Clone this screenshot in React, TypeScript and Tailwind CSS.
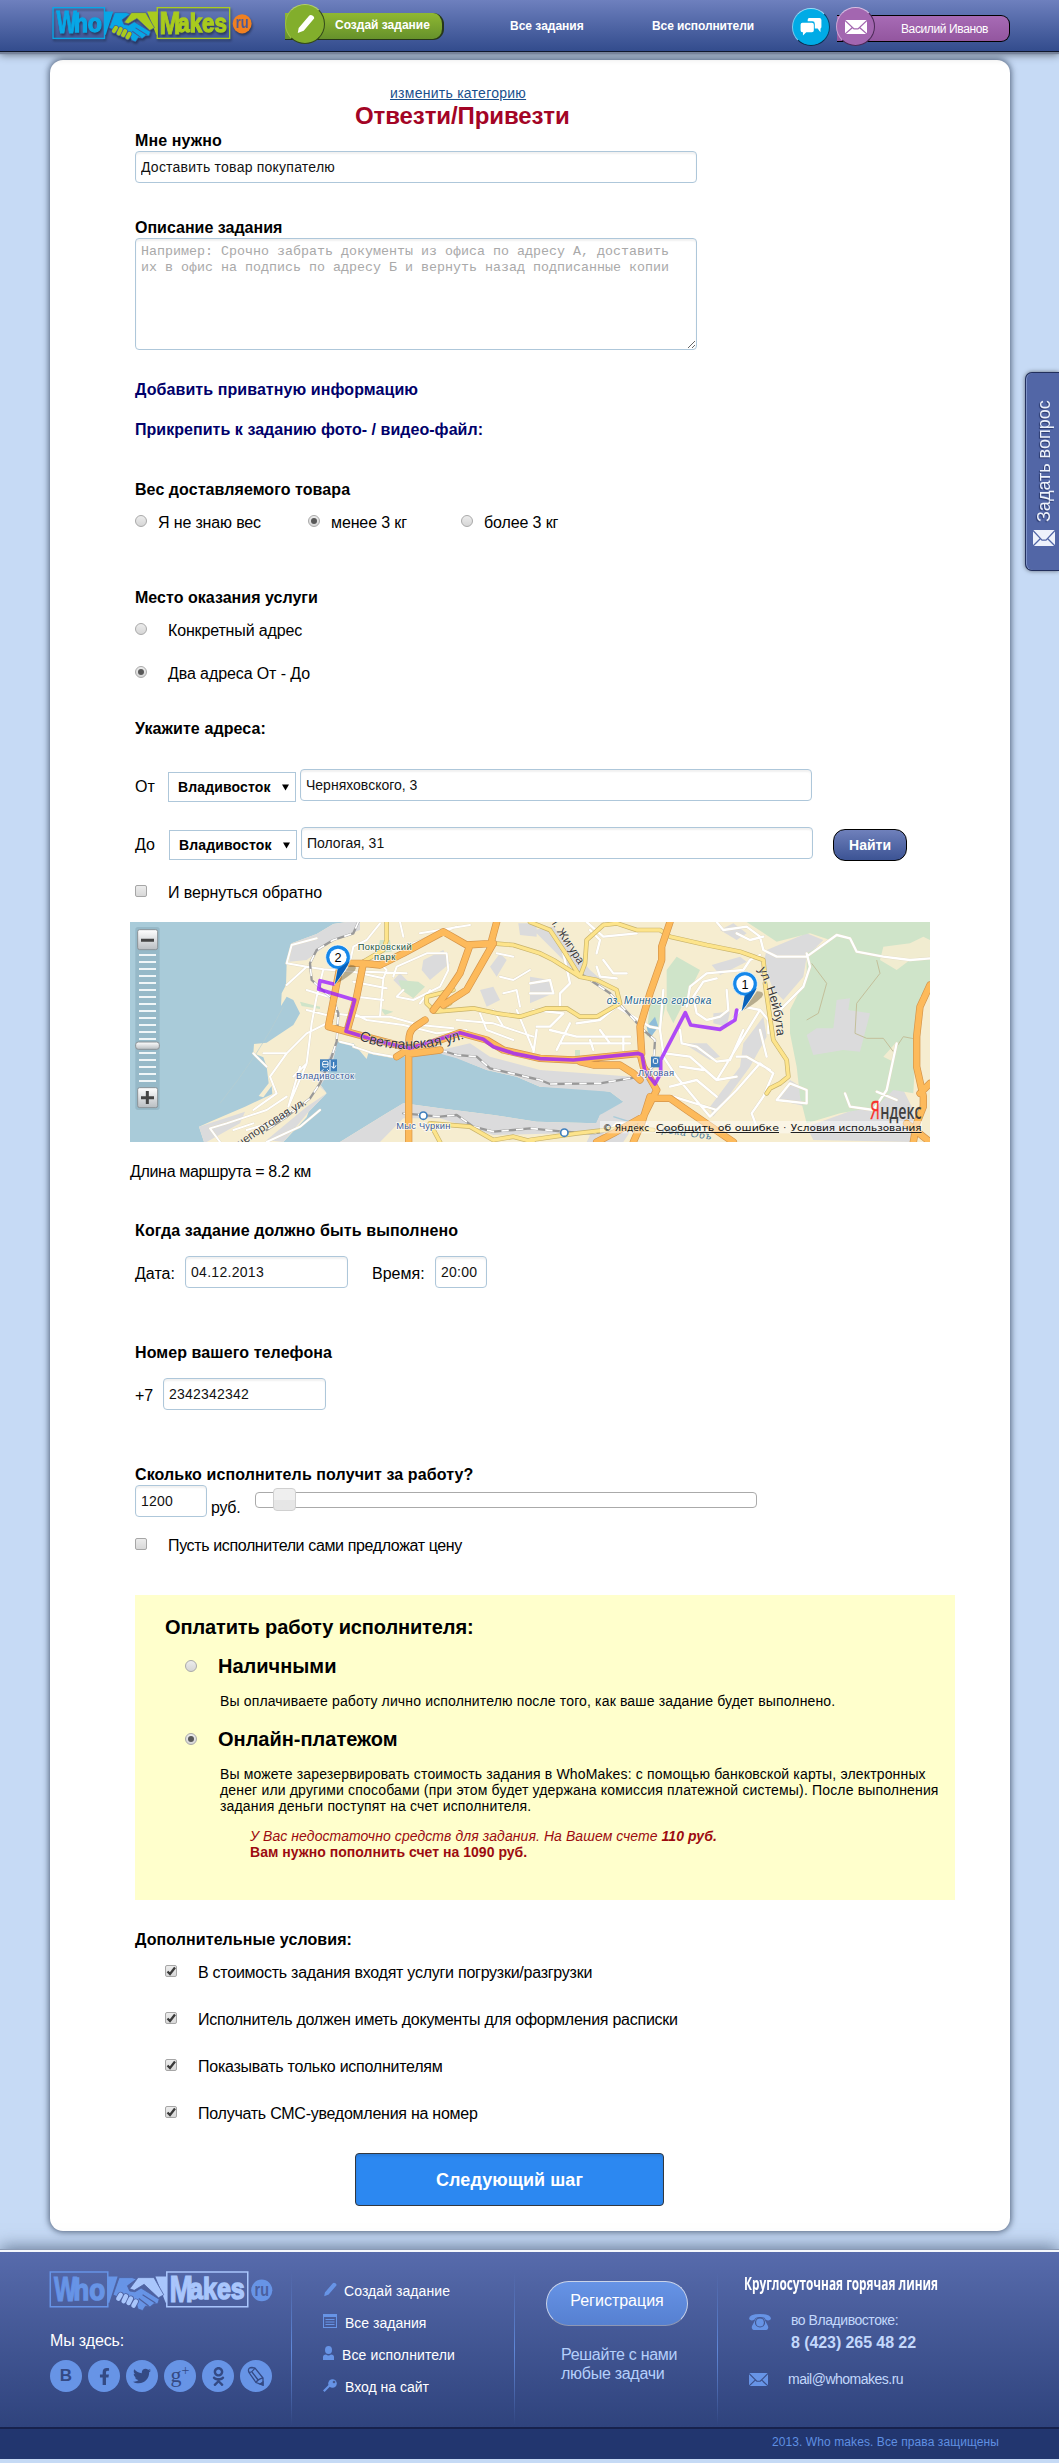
import React from "react";
import { FaFacebookF, FaTwitter, FaOdnoklassniki } from "react-icons/fa";

const arial = "font-['Liberation_Sans',sans-serif]";

type LogoColors = { who: string; makes: string; ru: string; ruText: string; line: string };

function Logo({ c, className }: { c: LogoColors; className: string }) {
  const face = { fontFamily: "Liberation Sans, sans-serif", fontWeight: 700 };
  return (
    <svg viewBox="150 15 600 115" preserveAspectRatio="none" className={className}>
      <rect x="156" y="23" width="152" height="93" fill="none" stroke={c.who} strokeWidth="4" />
      <rect x="464" y="23" width="214" height="93" fill="none" stroke={c.makes} strokeWidth="4" />
      <text x="166" y="101" fontSize="94" textLength="60" lengthAdjust="spacingAndGlyphs" fill={c.who} stroke={c.who} strokeWidth="3" style={face}>W</text>
      <text x="217" y="97" fontSize="80" textLength="84" lengthAdjust="spacingAndGlyphs" fill={c.who} stroke={c.who} strokeWidth="4" style={face}>ho</text>
      <text x="471" y="102" fontSize="97" textLength="62" lengthAdjust="spacingAndGlyphs" fill={c.makes} stroke={c.makes} strokeWidth="3" style={face}>M</text>
      <text x="523" y="96" fontSize="78" textLength="147" lengthAdjust="spacingAndGlyphs" fill={c.makes} stroke={c.makes} strokeWidth="4" style={face}>akes</text>
      <path d="M308 35H334L312 105H308Z" fill={c.who} />
      <path d="M464 35H434L461 105H464Z" fill={c.makes} />
      <path d="M338 38L372 38L384 42L360 60L366 74L380 76L396 66L444 96L440 108L430 108L420 116L408 114L400 126L388 122L384 108L372 98L356 88L346 82L334 90L322 84Z" fill={c.who} stroke={c.line} strokeWidth="2" />
      <path d="M388 38L430 38L456 84L442 92L404 56L378 72L366 68Z" fill={c.makes} stroke={c.line} strokeWidth="2" />
      <path d="M400 84L434 106M390 94L416 114" stroke={c.line} strokeWidth="3" fill="none" />
      <g strokeLinecap="round" fill="none">
        <path d="M342 84L336 94M356 88L350 101M369 94L363 106M382 102L376 113" stroke={c.line} strokeWidth="16" />
        <path d="M342 84L336 94M356 88L350 101M369 94L363 106M382 102L376 113" stroke={c.makes} strokeWidth="12" />
      </g>
      <ellipse cx="715" cy="72" rx="28" ry="29" fill={c.ru} />
      <text x="696" y="86" fontSize="50" textLength="38" lengthAdjust="spacingAndGlyphs" fill={c.ruText} style={face}>ru</text>
    </svg>
  );
}

function Envelope({ className, line }: { className: string; line: string }) {
  return (
    <svg viewBox="0 0 22 15" preserveAspectRatio="none" className={className}>
      <rect width="22" height="15" rx="1" fill="currentColor" />
      <path d="M0 .5L9 9.500H13L22 .5M0 15L7.500 8M22 15L14.500 8" fill="none" stroke={line} strokeWidth="1.300" />
    </svg>
  );
}

function Pencil({ className }: { className: string }) {
  return (
    <svg viewBox="0 0 20 22" className={className} fill="currentColor">
      <path d="M13.500 2.500Q15.500 0 18 2T19 5.500L8 18.500L1.500 21L2.500 15.500Z" />
    </svg>
  );
}

function Field({ value, className }: { value: string; className: string }) {
  return (
    <input
      readOnly
      value={value}
      className={`${className} h-8 shrink-0 rounded-[4px] border border-[#aec7da] bg-white pb-px pl-[5px] text-sm text-[#111] shadow-[inset_0_2px_2px_rgba(0,0,0,0.06)] outline-none`}
    />
  );
}

function Radio({ on, className = "" }: { on?: boolean; className?: string }) {
  return (
    <span className={`${className} mr-px flex h-3 w-3 shrink-0 items-center justify-center rounded-full border border-[#a9a9a9] bg-linear-to-b from-[#ececec] to-[#d6d6d6]`}>
      {on && <span className="h-[6px] w-[6px] rounded-full bg-[#585858]" />}
    </span>
  );
}

function Check({ on, className = "" }: { on?: boolean; className?: string }) {
  return (
    <span className={`${className} relative mr-px h-3 w-3 shrink-0 rounded-[2px] border border-[#a6a6a6] bg-linear-to-b from-[#ececec] to-[#d8d8d8]`}>
      {on && (
        <svg viewBox="0 0 12 12" className="absolute -top-[1px] -left-px h-3 w-3">
          <path d="M2.500 6.500L5 9L10 2.500" fill="none" stroke="#3a3a3a" strokeWidth="2.300" />
        </svg>
      )}
    </span>
  );
}

function H({ children, className }: { children: React.ReactNode; className: string }) {
  return <div className={`${className} text-base leading-5 font-bold`}>{children}</div>;
}

function City() {
  return (
    <div className="mt-[3px] flex h-[30px] w-[128px] shrink-0 items-center border border-[#aec7da] pl-[9px]">
      <span className="w-[95px] text-sm font-bold tracking-[0.13px]">Владивосток</span>
      <svg viewBox="0 0 8 7" className="ml-[9px] h-[7px] w-[7px]"><path d="M0 0H8L4 7Z" /></svg>
    </div>
  );
}

function Pin({ x, y, n }: { x: number; y: number; n: string }) {
  return (
    <g transform={`translate(${x} ${y})`}>
      <path d="M-4 78L36 22Q62 22 50 40Q30 60 -4 78Z" fill="#6b5d3c" opacity=".45" />
      <path d="M-37 0A37 37 0 1 1 35 12Q26 34 -10 82L-1 36A37 37 0 0 1 -37 0Z" fill="#1588ea" stroke="#fff" strokeWidth="2" />
      <path d="M-1 36L-10 82Q26 34 35 12Z" fill="#0a62ba" />
      <circle r="26" fill="#fff" />
      <text x="0" y="14" textAnchor="middle" fontSize="38" style={{ fontFamily: "Liberation Sans, sans-serif" }}>{n}</text>
    </g>
  );
}

const streetsWest =
  "M500 160L560 170L610 178L700 185L790 205L800 180L770 150M500 225L560 170M560 240L640 265M610 178L590 260L575 340L560 460L505 590M500 160L515 105L590 85M640 310L720 320L810 320L900 345L1000 355M790 205L780 320M700 215L800 235M735 185L860 190M710 260L790 270M560 300L640 320M430 430L500 430L560 370L640 330M500 430L450 500L470 550L400 600M560 460L520 500M540 470L505 590M700 310L740 330L850 345L950 370L1040 360M780 40L740 90L700 110L690 155M840 36L850 80M960 60L1050 45M880 100L1010 50M900 70L960 60M820 200L830 170L920 130L980 130L985 180L960 230L880 270L830 260L850 240M900 280L930 240M1010 330L1120 340L1180 360M1080 310L1100 360L1180 390M1120 300L1150 350L1240 380M1190 300L1240 420M1140 200L1180 210L1230 180M1150 250L1190 240L1200 290M1130 130L1180 140M700 410L760 430L820 440M660 395L700 405M600 600L540 650L440 696M500 560L440 600L320 640L270 655L300 696M340 660L400 640M520 600L450 640L380 660M400 430L440 470";
const streetsEast =
  "M470 290L480 230L530 190L640 180L660 150L690 135M560 36L580 60L650 50L690 80L700 120L740 140L830 140L920 75L960 85L980 125L1060 140L1140 150L1200 145M830 130L840 170L820 230L740 310M620 70L660 90L700 80M590 240L595 300L570 320L530 330L500 310L490 260L520 215L560 205M400 430L390 360L400 240M360 350L385 355M405 430L480 440L560 510L690 300L640 290M630 300L600 340M690 300L715 330L715 370M450 360L455 400L500 410L560 455L600 450L640 360M540 620L620 540L690 460L730 490L700 560L665 610L680 650M620 440L650 440L720 480M690 360L710 440M560 510L620 500M400 440L440 500L540 620M420 530L500 510L560 560M430 560L560 600M450 470L520 480M740 570L780 520L830 540L830 580L740 570M945 550L960 590L1030 600L1070 540L1100 400M1040 545L1100 570M100 130L120 220L90 250L90 290M200 130L210 90L180 60M220 150L250 190L290 190M200 170L210 200L260 205M10 300L100 310L60 350L20 350M140 340L210 330L260 290L360 350M60 360L140 380L300 380M90 400L300 400M120 340L80 420M20 360L10 430M180 390L190 420M280 380L280 420M210 360L240 400M0 220L60 210L70 250L0 250M170 36L220 80L320 70M200 696L260 640L350 640";
const rail =
  "M715 36L700 70L640 90L590 120L570 160L575 210L640 270L655 310L650 395L635 440L600 520L570 565L500 620L440 660M960 420L1010 435L1070 440L1110 475L1260 510L1290 522L1440 520L1560 500L1600 470L1605 390L1570 360L1470 250L1380 190M850 610L960 620L1010 615L1060 650L1120 665L1180 660L1230 655L1330 665L1420 670L1520 655";
const orange =
  "M690 160L730 160L780 165L850 130L970 65L1040 105L1120 100M730 160L710 260L682 360M660 170L625 350L680 365L870 415L830 440M866 696V400Q866 360 885 350L915 330M1050 105L1020 190L990 235L940 300M1120 100L1080 170L1040 240L970 285M1130 36L1110 110M866 415L920 405L1020 368L1100 390L1150 420L1260 445L1360 450L1560 430L1570 470L1610 540M1380 455L1420 465L1500 465L1540 490L1560 510M1650 36L1625 110L1625 150L1590 250L1560 350L1565 430M1610 540L1570 620L1480 670L1430 696M1600 565L1650 565L1700 600L1840 696M1590 560L1565 640L1540 696M2430 225L2400 290L2390 380L2390 470L2410 560L2410 590L2390 640L2380 696M2430 520L2400 550M2360 640L2430 696M866 432L960 420";
const yellow =
  "M800 36L800 90L790 120L730 155M1120 100L1180 105L1260 130L1300 150L1380 200L1430 210L1490 240L1500 280L1430 320L1380 320L1340 295L1280 295L1200 320L1130 310L1060 295L945 305L920 280L920 260L1000 240M945 305L990 280M1230 36L1290 60L1330 120L1380 200L1395 160L1400 90L1450 45M1450 45L1490 40L1550 60L1620 60L1650 80L1760 105L1860 125L1930 150L1935 200M1935 220L1960 390L2000 450L2005 500L1980 520L1950 535L1940 550M930 640L1050 650L1120 690L1180 680L1240 696M1230 690L1370 670L1500 655L1600 660M960 696L930 640";
const route =
  "M640 222L600 212L596 238L704 270L678 364L780 395L870 415L1020 368L1090 388L1120 410L1180 430L1260 446L1360 450L1555 430L1566 435L1574 480L1605 522L1622 490L1622 450L1696 308L1712 345L1800 358L1845 330L1850 300";

function RouteMap() {
  const sans = { fontFamily: "Liberation Sans, sans-serif" };
  const halo = { stroke: "#fff", strokeWidth: 5, strokeOpacity: 0.8, paintOrder: "stroke" as const };
  return (
    <svg viewBox="30 36 2400 660" className="-ml-[5px] mt-[19px] block h-[220px] w-[800px] shrink-0">
      <defs>
        <linearGradient id="btn" x1="0" y1="0" x2="0" y2="1"><stop offset="0" stopColor="#fff" /><stop offset="1" stopColor="#b9bec2" /></linearGradient>
        <path id="svet" d="M716 388C800 428 930 430 1070 372" />
        <path id="port" d="M362 712Q445 650 590 566" />
        <path id="neib" d="M1914 178Q1990 330 1964 480" />
        <path id="zhig" d="M1288 30L1412 220" />
      </defs>
      <rect x="30" y="36" width="2400" height="660" fill="#a9cbd9" />
      <path d="M680 36L640 42L590 72L515 100L500 160L498 225L485 250L483 288L500 260L520 270L540 310L520 345L440 398L402 402L400 430L430 442L440 470L446 520L416 558L430 562L455 528L457 552L375 590L270 635L237 650L252 696H490L560 622L566 605L620 550L598 520L640 445L652 395L700 400L740 447L745 430L820 445L960 420L1050 460L1100 480L1190 500L1260 530L1390 535L1470 545L1510 575L1475 605L1440 615L1430 640L1250 635L1120 615L960 595L850 580L800 610L660 696H2430V36Z" fill="#f6edd0" />
      <g fill="#dbdbdc">
        <path d="M680 36L640 42L590 72L515 100L508 155L560 150L640 90L720 60V36Z" />
        <path d="M237 650L375 605L360 640L260 696H252ZM440 690L560 590L620 550L566 605L490 696ZM652 395L635 470L600 530L620 550L590 510Z" />
        <path d="M940 425L1050 400L1110 440L1260 480L1540 500L1600 470L1600 560L1510 696H1400L1440 615L1510 575L1470 545L1260 530L1190 500L1100 480L1010 445Z" />
        <path d="M660 696L800 610L850 580L960 595L1120 615L1250 635L1430 640L1480 680L1330 670L1120 675L960 625L850 625L780 696Z" />
        <path d="M1240 60L1300 50L1410 180L1480 240L1380 200ZM1940 120L2060 70L2110 90L2060 140L2050 200L1990 270L1960 240L1930 160ZM1775 165L1860 140L1880 155L1800 195ZM1870 400L1930 320L1940 380L1890 470L1780 620L1770 590L1860 470ZM1975 570L2010 510L2060 540L2060 590ZM1800 60L1840 40L1880 70L1850 90ZM1780 310L1830 305L1820 350L1780 340ZM1690 400L1760 400L1800 440L1770 450ZM1195 40L1250 40L1250 80L1200 75ZM910 150L970 120L990 160L930 210L905 180ZM1110 170L1140 130L1160 150L1130 200ZM1080 240L1120 230L1140 270L1100 290ZM820 210L840 190L880 230L860 250ZM1230 200L1290 210L1300 250L1230 280Z" />
        <path d="M2080 690L2060 650L2200 600L2300 540L2350 540L2380 600V696Z" />
      </g>
      <g fill="#cfe4c9">
        <path d="M1880 36H2430V230L2400 260L2390 370L2380 550L2320 540L2270 590L2160 610L2060 640L2040 560L2030 470L2010 370L2010 300L2060 200L2060 130L2130 90L2070 70L1970 95Z" />
        <path d="M1640 180L1670 140L1740 180L1700 260L1660 340L1640 300ZM1590 270L1640 270L1625 340L1580 380ZM780 90L810 90L815 125L770 130ZM835 210L895 215L915 230L880 265L845 240ZM540 275L600 290L600 297L545 288ZM780 295L820 305L795 315ZM1365 420H1380V440H1365Z" />
      </g>
      <path d="M2060 375L2090 355L2140 355L2150 270L2190 265L2185 300L2250 310L2220 425L2170 420L2080 435Z" fill="#dbdbdc" />
      <path d="M2280 150L2290 110L2370 100L2410 80L2430 90V150L2370 150L2330 180ZM2290 440L2330 395L2320 455Z" fill="#f1ecd0" />
      <path d="M1580 350L1605 320L1615 350L1590 385Z" fill="#8fbdd9" />
      <path d="M1480 620L1560 645" fill="none" stroke="#a9cbd9" strokeWidth="4" />
      <path d="M2075 160L2120 220L2095 310L2060 330M2270 150L2280 190L2210 280L2205 370L2240 385L2290 385L2320 425L2350 380L2400 390" fill="none" stroke="#c3bf9a" strokeWidth="3" />
      <path d="M300 580Q420 430 490 290" fill="none" stroke="#b7cdd0" strokeWidth="2" />
      <g fill="none" strokeLinejoin="round" strokeLinecap="round">
        <path d={streetsWest} stroke="#e2d9c2" strokeWidth="8" />
        <path d={streetsEast} transform="translate(1230 0)" stroke="#e2d9c2" strokeWidth="9" />
        <path d={streetsWest} stroke="#fff" strokeWidth="6" />
        <path d={streetsEast} transform="translate(1230 0)" stroke="#fff" strokeWidth="7" />
        <path d={rail} stroke="#999" strokeWidth="7" />
        <path d={rail} stroke="#fff" strokeWidth="5" strokeDasharray="22 22" strokeLinecap="butt" />
        <path d={yellow} stroke="#c9b36a" strokeWidth="14" />
        <path d={yellow} stroke="#fde48b" strokeWidth="10" />
        <path d={orange} stroke="#d4944a" strokeWidth="22" />
        <path d={orange} stroke="#fdba5b" strokeWidth="18" />
        <path d={route} stroke="#9b1cff" strokeWidth="11" opacity=".78" />
      </g>
      <g style={sans} fontSize="28">
        <g fill="#24563f" {...halo} textAnchor="middle">
          <text x="794" y="119" textLength="162">Покровский</text>
          <text x="794" y="149" textLength="64">парк</text>
        </g>
        <g fill="#3d5c98" {...halo}>
          <text x="528" y="508" textLength="174">Владивосток</text>
          <text x="829" y="658" textLength="162">Мыс Чуркин</text>
          <text x="1554" y="497" textLength="108">Луговая</text>
        </g>
        <text x="1460" y="282" textLength="314" fontStyle="italic" fontSize="30" fill="#16618e" {...halo}>оз. Минного городка</text>
        <text x="1625" y="668" textLength="150" fontStyle="italic" fontSize="30" fill="#3d78a0" transform="rotate(8 1625 668)">река Объ</text>
        <g fill="#3b3b3b" stroke="#fff" strokeOpacity=".5" strokeWidth="3" paintOrder="stroke">
          <text fontSize="43"><textPath href="#svet">Светланская ул.</textPath></text>
          <text fontSize="34"><textPath href="#port">непортовая ул.</textPath></text>
          <text fontSize="38"><textPath href="#neib">ул. Нейбута</textPath></text>
          <text fontSize="35"><textPath href="#zhig">л. Жигура</textPath></text>
        </g>
      </g>
      <g>
        <rect x="600" y="448" width="51" height="36" fill="#3f7fbd" />
        <rect x="608" y="454" width="16" height="17" rx="4" fill="none" stroke="#fff" strokeWidth="3" />
        <path d="M608 463H624M610 478L605 483M622 478L627 483M630 450V484M641 456V474M635 468Q641 482 648 466" fill="none" stroke="#fff" strokeWidth="3" />
        <rect x="1593" y="440" width="26" height="32" fill="#3f7fbd" />
        <rect x="1600" y="446" width="13" height="14" rx="3" fill="none" stroke="#fff" strokeWidth="3" />
        <circle cx="910" cy="617" r="11" fill="#fff" stroke="#3f7fbd" strokeWidth="5" />
        <circle cx="1333" cy="668" r="11" fill="#fff" stroke="#3f7fbd" strokeWidth="5" />
      </g>
      <Pin x={654} y={142} n="2" />
      <Pin x={1875} y={222} n="1" />
      <rect x="46" y="51" width="73" height="549" rx="8" fill="#8fb0c0" opacity=".7" />
      <path d="M57 135H108M57 156H108M57 177H108M57 198H108M57 219H108M57 240H108M57 261H108M57 282H108M57 303H108M57 324H108M57 345H108M57 366H108M57 387H108M57 429H108M57 450H108M57 471H108M57 492H108M57 513H108" stroke="#f0f6f8" strokeWidth="6" />
      <g fill="url(#btn)" stroke="#8a9297" strokeWidth="3">
        <rect x="53" y="59" width="60" height="60" rx="6" />
        <rect x="53" y="533" width="60" height="60" rx="6" />
        <rect x="47" y="396" width="71" height="22" rx="8" />
      </g>
      <path d="M63 91H102M63 563H102M82 543V582" stroke="#444" strokeWidth="9" />
      <rect x="1440" y="633" width="966" height="37" fill="#fff" opacity=".45" />
      <g fontSize="28" style={{ fontFamily: "DejaVu Sans, sans-serif" }} fill="#111">
        <text x="1448" y="663" textLength="140" lengthAdjust="spacingAndGlyphs">© Яндекс</text>
        <text x="1608" y="663" textLength="369" lengthAdjust="spacingAndGlyphs" textDecoration="underline">Сообщить об ошибке</text>
        <text x="1990" y="663">·</text>
        <text x="2012" y="663" textLength="393" lengthAdjust="spacingAndGlyphs" textDecoration="underline">Условия использования</text>
      </g>
      <g style={{ fontFamily: "Open Sans, sans-serif" }}>
        <text x="2251" y="627" fontSize="74" textLength="29" lengthAdjust="spacingAndGlyphs" fill="#f9302c" stroke="#f9302c">Я</text>
        <text x="2281" y="627" fontSize="62" fontWeight="600" textLength="124" lengthAdjust="spacingAndGlyphs" fill="#3f3f3f">ндекс</text>
      </g>
    </svg>
  );
}

const extras = [
  "В стоимость задания входят услуги погрузки/разгрузки",
  "Исполнитель должен иметь документы для оформления расписки",
  "Показывать только исполнителям",
  "Получать СМС-уведомления на номер",
];

function Social({ children }: { children: React.ReactNode }) {
  return <span className="flex h-8 w-8 items-center justify-center rounded-full bg-[#6794e6] text-[#344a84]">{children}</span>;
}

function Divider() {
  return <div className="mt-5 h-[153px] w-px shrink-0 bg-linear-to-b from-transparent via-[#6088d8] to-transparent" />;
}

export default function App() {
  return (
    <div className={`${arial} relative flex h-[2463px] w-[1059px] flex-col overflow-hidden bg-[#c6daf5] text-black`}>
      <header className="relative z-10 flex h-[52px] shrink-0 items-start border-b border-[#10182c] bg-linear-to-b from-[#6e80be] to-[#334c8d] shadow-[0_2px_1px_#76829a,0_3px_8px_rgba(0,0,0,0.45)]">
        <Logo
          className="mt-[5px] ml-[51px] h-[38px] w-[203px] shrink-0 drop-shadow-[1px_2px_1px_rgba(0,0,0,0.4)]"
          c={{ who: "#07a7e6", makes: "#a9cb1e", ru: "#f08021", ruText: "#4a5a99", line: "#44579a" }}
        />
        <div className="relative mt-[13px] ml-[31px] flex h-[27px] w-[159px] shrink-0 items-center rounded-r-[11px] border-r-2 border-b border-[#26371a] bg-linear-to-b from-[#8fb832] to-[#66912b]">
          <span className="absolute -top-[9px] left-0 flex h-10 w-10 items-center justify-center rounded-full border border-t-[#b5d06a] border-r-[#33491b] border-b-[#33491b] border-l-[#9dbf45] bg-[#82ae2c] text-white">
            <Pencil className="h-5 w-[19px]" />
          </span>
          <span className="mb-[3px] ml-[50px] text-xs font-bold whitespace-nowrap text-white">Создай задание</span>
        </div>
        <a className="mt-[18px] ml-[66px] w-[74px] text-xs font-bold whitespace-nowrap text-white">Все задания</a>
        <a className="mt-[18px] ml-[68px] w-[102px] text-xs font-bold tracking-[-0.1px] whitespace-nowrap text-white">Все исполнители</a>
        <span className="mt-[8px] ml-[38px] flex h-[38px] w-[38px] shrink-0 items-center justify-center rounded-full border border-t-[#9adcf5] border-r-[#0b3f66] border-b-[#0b2b4c] border-l-[#7ccbee] bg-[#00abe6]">
          <svg viewBox="0 0 22 19" className="h-[18px] w-[22px]" fill="#fff">
            <path d="M9 0H20Q22 0 22 2V9Q22 11 21 11V15L18 11H15V6Q15 3.500 12.500 3.500H7.500V2Q7.500 0 9 0Z" />
            <path d="M2 5H12Q14 5 14 7V13Q14 15 12 15H6L2.500 18.500V15H2Q0 15 0 13V7Q0 5 2 5Z" />
          </svg>
        </span>
        <div className="relative mt-[15px] ml-[7px] flex h-[27px] w-[173px] shrink-0 items-center rounded-r-[9px] border border-l-0 border-black bg-linear-to-b from-[#a76bb5] to-[#93569f]">
          <span className="absolute -top-[9px] -left-px flex h-[39px] w-[39px] items-center justify-center rounded-full border border-t-[#d9bfe2] border-r-[#4b2a57] border-b-[#4b2a57] border-l-[#c9a5d4] bg-[#a366b0] text-white">
            <Envelope className="h-[14px] w-[22px]" line="#a366b0" />
          </span>
          <span className="ml-[64px] text-xs tracking-[-0.38px] whitespace-nowrap text-white">Василий Иванов</span>
        </div>
      </header>

      <main className="mt-[8px] ml-[50px] flex h-[2171px] w-[960px] shrink-0 flex-col items-start rounded-[13px] bg-white pt-[25px] pl-[85px] whitespace-nowrap shadow-[0_0_6px_1px_rgba(40,55,80,0.75)]">
        <a className="ml-[255px] text-sm leading-4 tracking-[0.26px] text-[#1a4f8c] underline underline-offset-1">изменить категорию</a>
        <h1 className="mt-px ml-[220px] text-2xl leading-7 font-bold tracking-[-0.1px] text-[#a30425]">Отвезти/Привезти</h1>
        <H className="mt-px tracking-[0.12px]">Мне нужно</H>
        <Field value="Доставить товар покупателю" className="w-[562px] tracking-[0.23px]" />

        <H className="mt-[35px]">Описание задания</H>
        <textarea
          placeholder={"Например: Срочно забрать документы из офиса по адресу А, доставить\nих в офис на подпись по адресу Б и вернуть назад подписанные копии"}
          className="h-[112px] w-[562px] shrink-0 resize rounded-[4px] border border-[#aec7da] pt-[5px] pl-[5px] font-['Liberation_Mono',monospace] text-[13.33px] leading-4 shadow-[inset_0_2px_2px_rgba(0,0,0,0.06)] placeholder:text-[#a9a9a9]"
        />

        <H className="mt-[30px] tracking-[0.08px] text-[#00006a]">Добавить приватную информацию</H>
        <H className="mt-5 tracking-[0.04px] text-[#00006a]">Прикрепить к заданию фото- / видео-файл:</H>

        <H className="mt-10 tracking-[0.07px]">Вес доставляемого товара</H>
        <div className="mt-[13px] flex h-5 items-start leading-5">
          <Radio className="mt-[2px]" />
          <span className="ml-[10px] w-[150px] tracking-[-0.15px]">Я не знаю вес</span>
          <Radio on className="mt-[2px]" />
          <span className="ml-[10px] w-[130px] tracking-[-0.12px]">менее 3 кг</span>
          <Radio className="mt-[2px]" />
          <span className="ml-[10px] tracking-[-0.12px]">более 3 кг</span>
        </div>

        <H className="mt-[55px] tracking-[0.03px]">Место оказания услуги</H>
        <div className="mt-[13px] flex h-5 items-start leading-5">
          <Radio className="mt-[2px]" />
          <span className="ml-5 tracking-[-0.15px]">Конкретный адрес</span>
        </div>
        <div className="mt-[23px] flex h-5 items-start leading-5">
          <Radio on className="mt-[2px]" />
          <span className="ml-5 tracking-[-0.1px]">Два адреса От - До</span>
        </div>

        <H className="mt-[35px] tracking-[0.1px]">Укажите адреса:</H>
        <div className="mt-[30px] flex h-[33px] items-start leading-5">
          <span className="mt-[8px] w-[33px]">От</span>
          <City />
          <Field value="Черняховского, 3" className="ml-1 w-[512px]" />
        </div>
        <div className="mt-[25px] flex h-[34px] items-start leading-5">
          <span className="mt-[8px] w-[34px]">До</span>
          <City />
          <Field value="Пологая, 31" className="ml-1 w-[512px]" />
          <button className="mt-[2px] ml-[20px] h-[32px] w-[74px] rounded-[12px] border border-black bg-linear-to-b from-[#6f80bb] to-[#3c5394] pb-px text-sm font-bold text-white">Найти</button>
        </div>
        <div className="mt-[22px] flex h-5 items-start leading-5">
          <Check className="mt-[2px]" />
          <span className="ml-5 tracking-[-0.12px]">И вернуться обратно</span>
        </div>

        <RouteMap />
        <div className="mt-5 -ml-[5px] leading-5 tracking-[-0.33px]">Длина маршрута = 8.2 км</div>

        <H className="mt-[39px] tracking-[0.12px]">Когда задание должно быть выполнено</H>
        <div className="mt-[15px] flex h-8 items-start leading-5">
          <span className="mt-[8px] w-[50px]">Дата:</span>
          <Field value="04.12.2013" className="w-[163px] tracking-[0.29px]" />
          <span className="mt-[8px] ml-6 w-[63px]">Время:</span>
          <Field value="20:00" className="w-[52px] tracking-[0.25px]" />
        </div>

        <H className="mt-[55px] tracking-[0.09px]">Номер вашего телефона</H>
        <div className="mt-[15px] flex h-8 items-start leading-5">
          <span className="mt-[8px] w-[28px]">+7</span>
          <Field value="2342342342" className="w-[163px] tracking-[0.2px]" />
        </div>

        <H className="mt-[55px] tracking-[0.1px]">Сколько исполнитель получит за работу?</H>
        <div className="flex h-8 items-start leading-5">
          <Field value="1200" className="w-[72px] tracking-[0.25px]" />
          <span className="mt-[13px] ml-1 w-[44px] tracking-[-0.3px]">руб.</span>
          <div className="relative mt-[7px] h-4 w-[502px] rounded-[4px] border border-[#aaa]">
            <span className="absolute -top-[5px] left-[17px] h-[23px] w-[23px] rounded-[4px] border border-[#d0d0d0] bg-linear-to-b from-[#efefef] from-50% to-[#e6e6e6] to-50%" />
          </div>
        </div>
        <div className="mt-[19px] flex h-5 items-start leading-5">
          <Check className="mt-[2px]" />
          <span className="ml-5 tracking-[-0.37px]">Пусть исполнители сами предложат цену</span>
        </div>

        <section className="mt-[39px] flex h-[305px] w-[820px] shrink-0 flex-col items-start bg-[#ffffcc] pt-5 pl-[30px] text-sm leading-4">
          <div className="text-xl leading-6 font-bold tracking-[-0.12px]">Оплатить работу исполнителя:</div>
          <div className="mt-[15px] ml-5 flex items-center">
            <Radio />
            <span className="ml-5 text-xl leading-6 font-bold">Наличными</span>
          </div>
          <div className="mt-[15px] ml-[55px] tracking-[0.15px]">Вы оплачиваете работу лично исполнителю после того, как ваше задание будет выполнено.</div>
          <div className="mt-[18px] ml-5 flex items-center">
            <Radio on />
            <span className="ml-5 text-xl leading-6 font-bold">Онлайн-платежом</span>
          </div>
          <div className="mt-[15px] ml-[55px] tracking-[0.16px]">
            Вы можете зарезервировать стоимость задания в WhoMakes: с помощью банковской карты, электронных
            <br />
            денег или другими способами (при этом будет удержана комиссия платежной системы). После выполнения
            <br />
            задания деньги поступят на счет исполнителя.
          </div>
          <div className="mt-[14px] ml-[85px] text-[#9c0b10]">
            <span className="tracking-[0.08px] italic">
              У Вас недостаточно средств для задания. На Вашем счете <b>110 руб.</b>
            </span>
            <br />
            <b className="tracking-[0.03px]">Вам нужно пополнить счет на 1090 руб.</b>
          </div>
        </section>

        <H className="mt-[30px] tracking-[0.09px]">Дополнительные условия:</H>
        <div className="mt-[13px] ml-[30px] flex flex-col gap-[27px] leading-5">
          {extras.map((t) => (
            <div key={t} className="flex h-5 items-start">
              <Check on className="mt-[2px]" />
              <span className="ml-5 tracking-[-0.25px]">{t}</span>
            </div>
          ))}
        </div>
        <button className="mt-[29px] ml-[220px] h-[53px] w-[309px] shrink-0 rounded-[4px] border border-[#33383f] bg-[#2c88f1] text-lg font-bold tracking-[0.07px] text-white shadow-[inset_0_2px_3px_rgba(0,0,0,0.1)]">
          Следующий шаг
        </button>
      </main>

      <aside className="absolute top-[372px] left-[1025px] flex h-[199px] w-[34px] flex-col items-center rounded-l-[7px] border border-r-0 border-[#222f5c] bg-[#5266a6] pt-[27px] pl-[3px] text-[#eef2fb] shadow-[0_0_4px_rgba(0,0,0,0.5),inset_1px_0_0_#7f93c8]">
        <span className="h-[122px] rotate-180 text-lg leading-5 whitespace-nowrap [text-shadow:-1px_-1px_1px_#2b3a6e] [writing-mode:vertical-rl]">Задать вопрос</span>
        <Envelope className="mt-[8px] h-[16px] w-[22px]" line="#5266a6" />
      </aside>

      <footer className="mt-[19px] flex h-[177px] shrink-0 items-start border-t-2 border-[#f4f7fc] bg-linear-to-b from-[#576bac] to-[#2f437d] whitespace-nowrap shadow-[0_-1px_0_#8b9bb5,0_-3px_16px_rgba(60,80,110,0.7)]">
        <div className="ml-[50px] flex w-[241px] shrink-0 flex-col pt-[17px]">
          <Logo
            className="-ml-[2px] h-[43px] w-[227px] shrink-0"
            c={{ who: "#6794e6", makes: "#a9c6fc", ru: "#6794e6", ruText: "#4a5f9e", line: "#4b5f9f" }}
          />
          <div className="mt-[19px] leading-5 tracking-[-0.14px] text-white">Мы здесь:</div>
          <div className="mt-[9px] flex gap-[6px]">
            <Social><b className="text-[17px]">В</b></Social>
            <Social><FaFacebookF size={17} /></Social>
            <Social><FaTwitter size={18} /></Social>
            <Social>
              <span className="mb-[3px] flex items-start font-['Liberation_Serif',serif] text-[22px] leading-6">g<span className="text-sm leading-4">+</span></span>
            </Social>
            <Social><FaOdnoklassniki size={19} /></Social>
            <Social>
              <svg viewBox="0 0 18 20" className="h-5 w-[18px]" fill="none" stroke="currentColor" strokeWidth="1.300">
                <path d="M1.500 5Q1 1.500 5 1.500L8 2L16 12V19L9 16.500L2 6.500Z" />
                <path d="M2 6.500Q5 6.500 8 2M5 6L11.500 14.500M9 16.500Q11 13 16 12" />
                <path d="M13 18L16 19V16Z" fill="currentColor" />
              </svg>
            </Social>
          </div>
        </div>
        <Divider />
        <nav className="ml-[31px] flex w-[191px] shrink-0 flex-col gap-3 pt-[29px] text-sm leading-5 text-white">
          <a className="flex items-center">
            <Pencil className="-mt-1 h-[15px] w-[14px] text-[#6794e6]" />
            <span className="ml-[7px] tracking-[0.07px]">Создай задание</span>
          </a>
          <a className="flex items-center">
            <svg viewBox="0 0 14 14" className="-mt-1 h-[14px] w-[14px]" fill="none" stroke="#6794e6">
              <rect x=".5" y=".5" width="13" height="13" /><path d="M0 1.500H14" strokeWidth="3" /><path d="M2.500 5.500H11.500M2.500 8H11.500M2.500 10.500H11.500" />
            </svg>
            <span className="ml-[8px]">Все задания</span>
          </a>
          <a className="flex items-center">
            <svg viewBox="0 0 11 14" className="-mt-1 h-[14px] w-[11px]" fill="#6794e6">
              <ellipse cx="5.500" cy="4" rx="3.500" ry="4" /><path d="M0 14V11Q0 8.500 3 8.500Q5.500 10.500 8 8.500Q11 8.500 11 11V14Z" />
            </svg>
            <span className="ml-[8px] tracking-[0.12px]">Все исполнители</span>
          </a>
          <a className="flex items-center">
            <svg viewBox="0 0 14 13" className="-mt-1 h-[13px] w-[14px]">
              <path d="M.8 12.200L7 6" stroke="#6794e6" strokeWidth="2.200" /><circle cx="9.500" cy="4.500" r="4.300" fill="#6794e6" /><circle cx="11" cy="3" r="1.300" fill="#44588f" />
            </svg>
            <span className="ml-[8px]">Вход на сайт</span>
          </a>
        </nav>
        <Divider />
        <div className="flex w-[202px] shrink-0 flex-col items-start pt-[29px]">
          <button className="ml-[31px] h-[45px] w-[142px] rounded-full border border-[#c9d3ea] border-b-[#8d97b5] bg-linear-to-b from-[#6693e6] to-[#5680d0] pb-[6px] text-base text-white">Регистрация</button>
          <div className="mt-[19px] ml-[46px] leading-[19px] tracking-[-0.28px] text-[#b5cffb]">
            Решайте с нами
            <br />
            любые задачи
          </div>
        </div>
        <Divider />
        <div className="ml-[26px] flex flex-col items-start pt-[22px] text-[#c3d8fc]">
          <div className="h-5 w-[194px] origin-left scale-x-[0.695] font-['Open_Sans',sans-serif] text-[17px] leading-5 font-bold text-white">Круглосуточная горячая линия</div>
          <div className="mt-[16px] ml-[5px] flex items-start">
            <svg viewBox="0 0 22 16" className="mt-[4px] h-4 w-[22px]" fill="#6794e6">
              <path d="M0 5Q0 0 11 0T22 5Q20 7.500 16.500 5.500Q16 3 11 3T5.500 5.500Q2 7.500 0 5Z" />
              <path d="M7 4.500H15L19 12Q20 16 16 16H6Q2 16 3 12Z" />
              <circle cx="11" cy="8.500" r="4.500" stroke="#42568f" strokeWidth="1.200" />
            </svg>
            <div className="ml-5">
              <div className="text-sm leading-5 tracking-[-0.45px]">во Владивостоке:</div>
              <div className="mt-[3px] leading-5 font-bold tracking-[-0.08px]">8 (423) 265 48 22</div>
            </div>
          </div>
          <div className="mt-4 ml-[5px] flex items-center text-sm leading-5">
            <Envelope className="h-[13px] w-[19px] text-[#6794e6]" line="#3a4e88" />
            <span className="ml-5 tracking-[-0.5px]">mail@whomakes.ru</span>
          </div>
        </div>
      </footer>
      <div className="flex h-[32px] shrink-0 justify-end border-t-2 border-[#17224d] bg-[#22366f] pt-[5px] pr-[60px] text-xs leading-4 tracking-[0.09px] text-[#5f8fe2]">
        2013. Who makes. Все права защищены
      </div>
    </div>
  );
}
